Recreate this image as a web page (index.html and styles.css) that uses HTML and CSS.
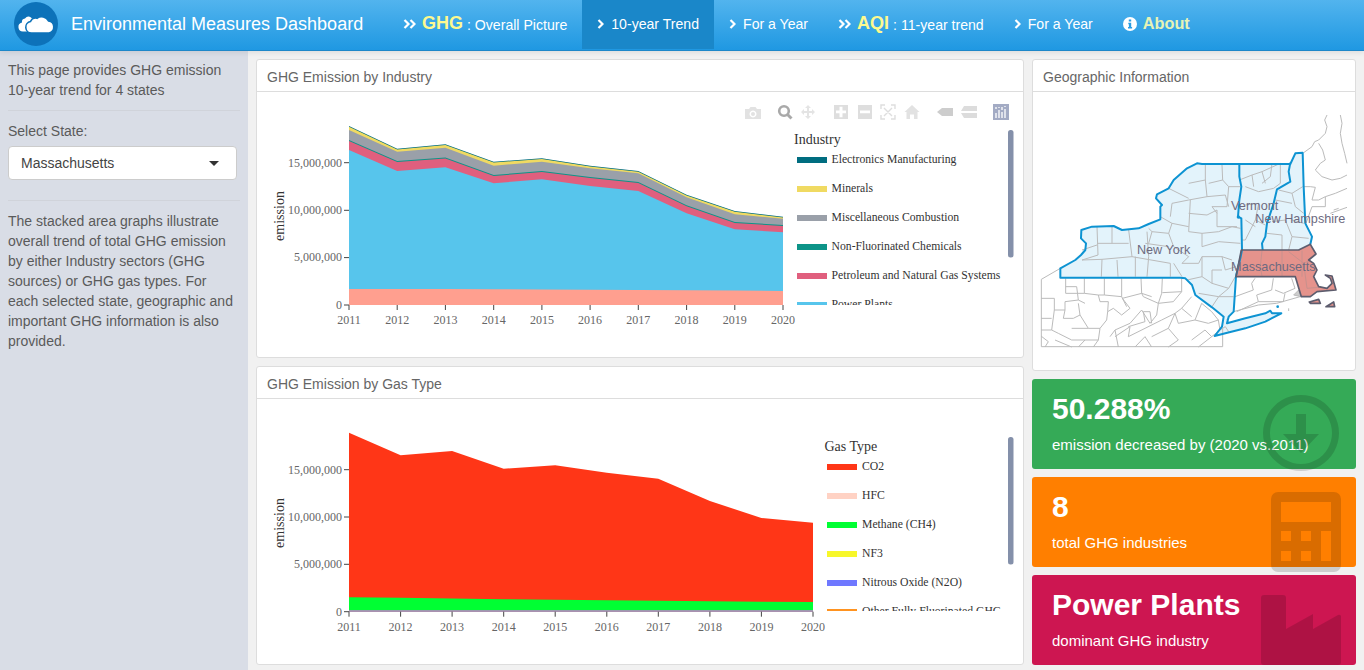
FILE: index.html
```html
<!DOCTYPE html>
<html lang="en">

<head>
    <meta charset="UTF-8">
    <meta name="viewport" content="width=device-width, initial-scale=1.0">
    <title>Environmental Measures Dashboard</title>
    <link rel="stylesheet" href="styles.css">
</head>

<body>
    <!-- Top bar -->
    <header class="topbar">
        <div class="brand">
            <svg class="brand-logo" viewBox="0 0 44 44">
                <circle cx="22" cy="22" r="22" fill="#0d72b9"/>
                <path fill="#fff" d="M9 29.500a4.500 4.500 0 0 1-1-8.900 3.500 3.500 0 0 1 3-4.100 4.500 4.500 0 0 1 6-1l3 4-4 10z"/>
                <path fill="#fff" stroke="#0d72b9" stroke-width="1.600" d="M17.500 31a5.800 5.800 0 0 1-1-11.500 5.500 5.500 0 0 1 6.500-3.200 7.800 7.800 0 0 1 11.500 2.700 6.100 6.100 0 0 1 .5 12z"/>
            </svg>
            <span class="brand-title">Environmental Measures Dashboard</span>
        </div>
        <nav class="nav">
            <a class="nav-item">
                <svg class="nav-icon wide" viewBox="0 0 13 10"><path d="M1.500 1l4 4-4 4M7.500 1l4 4-4 4"/></svg>
                <b class="nav-big">GHG</b><span class="nav-sub">: Overall Picture</span>
            </a>
            <a class="nav-item active">
                <svg class="nav-icon" viewBox="0 0 7 10"><path d="M1.500 1l4 4-4 4"/></svg>
                <span>10-year Trend</span>
            </a>
            <a class="nav-item">
                <svg class="nav-icon" viewBox="0 0 7 10"><path d="M1.500 1l4 4-4 4"/></svg>
                <span>For a Year</span>
            </a>
            <a class="nav-item">
                <svg class="nav-icon wide" viewBox="0 0 13 10"><path d="M1.500 1l4 4-4 4M7.500 1l4 4-4 4"/></svg>
                <b class="nav-big">AQI</b><span class="nav-sub">: 11-year trend</span>
            </a>
            <a class="nav-item">
                <svg class="nav-icon" viewBox="0 0 7 10"><path d="M1.500 1l4 4-4 4"/></svg>
                <span>For a Year</span>
            </a>
            <a class="nav-item">
                <svg class="nav-info" viewBox="0 0 14 14">
                    <circle cx="7" cy="7" r="7" fill="#fff"/>
                    <path fill="#2a9de3" d="M5.800 2.500h2.400v2H5.800zM5.300 5.800h2.900v4.200h.9v1.400H5v-1.400h.9V7.200h-.6z"/>
                </svg>
                <b class="nav-about">About</b>
            </a>
        </nav>
    </header>

    <div class="page">
        <!-- Sidebar -->
        <aside class="sidebar">
            <p>This page provides GHG emission 10-year trend for 4 states</p>
            <hr>
            <label class="select-label">Select State:</label>
            <div class="select-box">
                <span>Massachusetts</span>
                <i class="caret"></i>
            </div>
            <hr class="second">
            <p>The stacked area graphs illustrate overall trend of total GHG emission by either Industry sectors (GHG sources) or GHG gas types. For each selected state, geographic and important GHG information is also provided.</p>
        </aside>

        <main class="content">
            <div class="col-left">
                <section class="card chart-card">
                    <div class="card-head">GHG Emission by Industry</div>
                    <svg class="chart" viewBox="257 92 766 265">
                        <defs>
                            <clipPath id="legendClipA"><rect x="790" y="125" width="225" height="180"/></clipPath>
                        </defs>

                        <!-- modebar -->
                        <g class="modebar">
                            <path fill="#e2e2e2" d="M745 109h4l1.500-2h5l1.500 2h4v10h-16zM753 110.500a3.500 3.500 0 1 0 .01 0z"/>
                            <circle cx="753" cy="114" r="2" fill="#e2e2e2"/>
                            <circle cx="784" cy="111" r="4.800" fill="none" stroke="#a9a9a9" stroke-width="2.600"/>
                            <path stroke="#a9a9a9" stroke-width="3" d="M787.500 114.500l4 4"/>
                            <path fill="#e4e4e4" d="M808 105l-3 3h2v3h-3v-2l-3 3 3 3v-2h3v3h-2l3 3 3-3h-2v-3h3v2l3-3-3-3v2h-3v-3h2l-3-3z"/>
                            <path fill="#dedede" d="M834 105h14v14h-14zM839.500 106.800v3.700h-3.500v2.800h3.500v3.900h3v-3.900h3.500v-2.800h-3.500v-3.700z"/>
                            <path fill="#dedede" d="M858 105h14v14h-14zM860 110.500v2.800h10v-2.800z"/>
                            <path fill="none" stroke="#dedede" stroke-width="1.400" d="M881 109v-4h4M891 105h4v4M895 115v4h-4M885 119h-4v-4M884 108l8 8M892 108l-8 8"/>
                            <path fill="#e2e2e2" d="M912 105l7.500 7h-2v7h-3.500v-4.500h-4V119h-3.500v-7h-2z"/>
                            <path fill="#cdcdcd" d="M937 112l5-4h11v8h-11z"/>
                            <path fill="#dcdcdc" d="M964 106h13v5h-16zM961 113h16v5h-13z"/>
                            <rect x="993" y="104" width="16" height="16" fill="#a3abc4"/>
                            <path stroke="#fff" stroke-width="1.300" d="M996 113v5M999 110v8M1002 112v6M1005 109v9M996 107v2M999 107v1M1002 107v3M1005 106v1"/>
                        </g>

                        <!-- stacked areas, top layer first -->
                        <path fill="#006d80" d="M349 126L397.200 148.700 445.400 144.300 493.700 161.700 541.900 158.300 590.100 165.700 638.300 171 686.600 194.700 734.800 211 783 216.700V305H349z"/>
                        <path fill="#f0da62" d="M349 126.800L397.200 149.500 445.400 145.100 493.700 162.500 541.900 159.100 590.100 166.500 638.300 171.800 686.600 195.500 734.800 211.800 783 217.500V305H349z"/>
                        <path fill="#9aa0a9" d="M349 130L397.200 151.700 445.400 147.700 493.700 165.700 541.900 161.700 590.100 168.300 638.300 173.300 686.600 197.300 734.800 214.300 783 218.700V305H349z"/>
                        <path fill="#0d9488" d="M349 140L397.200 161 445.400 157.600 493.700 175 541.900 171 590.100 177 638.300 182 686.600 205.300 734.800 222 783 225V305H349z"/>
                        <path fill="#e05f7e" d="M349 141L397.200 162 445.400 158.600 493.700 176 541.900 172 590.100 178 638.300 183 686.600 206.300 734.800 223 783 226V305H349z"/>
                        <path fill="#57c5ec" d="M349 150L397.200 171 445.400 167.300 493.700 183.300 541.900 179.300 590.100 186 638.300 191 686.600 213.300 734.800 229.300 783 232.300V305H349z"/>
                        <path fill="#ff9f8f" d="M349 289L397.200 289 445.400 289 493.700 289.300 541.900 289.500 590.100 289.700 638.300 290 686.600 290.300 734.800 290.500 783 291V305H349z"/>

                        <!-- axes -->
                        <path class="tick" d="M349 305v5M397.200 305v5M445.400 305v5M493.700 305v5M541.900 305v5M590.100 305v5M638.300 305v5M686.600 305v5M734.800 305v5M783 305v5M344 305h5M344 257.600h5M344 210.300h5M344 162.700h5"/>
                        <g class="axis-y">
                            <text x="342" y="167">15,000,000</text>
                            <text x="342" y="214">10,000,000</text>
                            <text x="342" y="261">5,000,000</text>
                            <text x="342" y="309">0</text>
                        </g>
                        <g class="axis-x">
                            <text x="349" y="324">2011</text>
                            <text x="397.200" y="324">2012</text>
                            <text x="445.400" y="324">2013</text>
                            <text x="493.700" y="324">2014</text>
                            <text x="541.900" y="324">2015</text>
                            <text x="590.100" y="324">2016</text>
                            <text x="638.300" y="324">2017</text>
                            <text x="686.600" y="324">2018</text>
                            <text x="734.800" y="324">2019</text>
                            <text x="783" y="324">2020</text>
                        </g>
                        <text class="axis-title" transform="translate(284 216) rotate(-90)">emission</text>

                        <!-- legend -->
                        <g clip-path="url(#legendClipA)">
                            <text class="legend-title" x="794" y="144">Industry</text>
                            <g class="legend">
                                <rect x="797" y="157" width="30" height="6" fill="#006d80"/><text x="831.500" y="163">Electronics Manufacturing</text>
                                <rect x="797" y="186" width="30" height="6" fill="#f0da62"/><text x="831.500" y="192">Minerals</text>
                                <rect x="797" y="215" width="30" height="6" fill="#9aa0a9"/><text x="831.500" y="221">Miscellaneous Combustion</text>
                                <rect x="797" y="244" width="30" height="6" fill="#0d9488"/><text x="831.500" y="250">Non-Fluorinated Chemicals</text>
                                <rect x="797" y="273" width="30" height="6" fill="#e05f7e"/><text x="831.500" y="279">Petroleum and Natural Gas Systems</text>
                                <rect x="797" y="302" width="30" height="6" fill="#57c5ec"/><text x="831.500" y="308">Power Plants</text>
                            </g>
                        </g>
                        <rect x="1008" y="130" width="5.500" height="127.500" rx="2.500" fill="#8490aa"/>
                    </svg>
                </section>

                <section class="card chart-card">
                    <div class="card-head">GHG Emission by Gas Type</div>
                    <svg class="chart" viewBox="257 399 766 265">
                        <defs>
                            <clipPath id="legendClipB"><rect x="820" y="430" width="195" height="181"/></clipPath>
                        </defs>

                        <path fill="#ff3617" d="M349 432.700L400.600 455.300 452.100 451 503.700 468.700 555.200 465.300 606.800 472.700 658.300 478.700 709.900 501 761.400 518 813 522.700V611.700H349z"/>
                        <path fill="#00ff33" d="M349 597.300L400.600 597.800 452.100 598.500 503.700 599.300 555.200 599.700 606.800 600.200 658.300 600.800 709.900 601.200 761.400 601.700 813 602V611.700H349z"/>
                        <path fill="#cf78d8" d="M349 610.300H813V611.700H349z"/>

                        <path class="tick" d="M349 611.700v5M400.600 611.700v5M452.100 611.700v5M503.700 611.700v5M555.200 611.700v5M606.800 611.700v5M658.300 611.700v5M709.900 611.700v5M761.400 611.700v5M813 611.700v5M344 611.700h5M344 564.300h5M344 517h5M344 469.700h5"/>
                        <g class="axis-y">
                            <text x="342" y="474">15,000,000</text>
                            <text x="342" y="521">10,000,000</text>
                            <text x="342" y="568">5,000,000</text>
                            <text x="342" y="616">0</text>
                        </g>
                        <g class="axis-x">
                            <text x="349" y="631">2011</text>
                            <text x="400.600" y="631">2012</text>
                            <text x="452.100" y="631">2013</text>
                            <text x="503.700" y="631">2014</text>
                            <text x="555.200" y="631">2015</text>
                            <text x="606.800" y="631">2016</text>
                            <text x="658.300" y="631">2017</text>
                            <text x="709.900" y="631">2018</text>
                            <text x="761.400" y="631">2019</text>
                            <text x="813" y="631">2020</text>
                        </g>
                        <text class="axis-title" transform="translate(284 523) rotate(-90)">emission</text>

                        <g clip-path="url(#legendClipB)">
                            <text class="legend-title" x="824.500" y="451">Gas Type</text>
                            <g class="legend">
                                <rect x="827" y="464" width="30" height="6" fill="#ff3617"/><text x="862" y="470">CO2</text>
                                <rect x="827" y="493" width="30" height="6" fill="#ffd2c4"/><text x="862" y="499">HFC</text>
                                <rect x="827" y="522" width="30" height="6" fill="#00ff33"/><text x="862" y="528">Methane (CH4)</text>
                                <rect x="827" y="551" width="30" height="6" fill="#f7f72a"/><text x="862" y="557">NF3</text>
                                <rect x="827" y="580" width="30" height="6" fill="#6f78ff"/><text x="862" y="586">Nitrous Oxide (N2O)</text>
                                <rect x="827" y="609" width="30" height="6" fill="#ff9320"/><text x="862" y="615">Other Fully Fluorinated GHG</text>
                            </g>
                        </g>
                        <rect x="1008" y="437" width="5.500" height="127.500" rx="2.500" fill="#8490aa"/>
                    </svg>
                </section>
            </div>

            <div class="col-right">
                <section class="card geo-card">
                    <div class="card-head">Geographic Information</div>
                    <svg class="map" viewBox="3 -24 966 834">
                        <!-- state fills -->
                        <g class="state">
                            <path d="M85 533V505L130 480 147 465 160 450 162 430 147 415 148 390 180 380 245 378 270 390 320 385 350 372 385 358V320L390 315 372 295 375 283 410 265 425 240 465 205 495 190 510 192H622L622 230 628 260 622 300 618 350 628 355 630 450 625 475 612 528 610 560 605 635 590 650 585 670 640 655 700 640 715 632 720 640 748 640 700 665 640 685 580 700 548 708 570 680 575 650 540 622 490 585 480 555 460 535 445 533z"/>
                            <path d="M622 190H775L770 215 775 245 735 268 725 310 705 370 700 410 690 430 692 450H630L628 355 618 350 622 300 628 260 622 230z"/>
                            <path d="M775 188L790 160 812 158 815 260 820 370 840 410 835 435 800 450H692L690 430 700 410 705 370 725 310 735 268 775 245 770 215z"/>
                        </g>

                        <!-- county lines: New York -->
                        <path class="county" d="M520 192V240L525 290 470 300 420 310 415 350M410 265L470 295M570 195L572 240 590 260H625M572 240L530 250M525 290L580 285 590 320M475 300L470 395 510 400 510 440 560 425 625 430M555 330L555 380H615M585 320H540L555 340M385 350L420 370 470 380M350 385L360 395 410 400 425 440 470 470 450 490M195 380L198 465 150 480M240 380V430H195M290 390L300 470 210 478 208 530M255 480L258 530M310 470V530M345 395L350 470 345 530M300 470L415 490V530M450 490H500L510 470H570L600 480M465 540L510 530 540 550 590 565 610 530M500 580L560 590H605M510 400L560 395 600 380 625 385M570 470L580 510 612 500M340 430L410 440M150 480L210 478M195 435L150 450M240 430L290 430M360 395L350 430M420 370L410 400M470 340L525 345 555 330M520 240L470 250M590 260L585 320M425 490L450 530M510 470V530M540 550V510L570 510M590 565L560 590M540 620L560 590"/>
                        <!-- Vermont and New Hampshire -->
                        <path class="county" d="M622 240L660 225 690 215 745 190V250L725 265M640 260L680 275 725 265M660 225L665 260M690 215L700 250M640 315L680 310 670 360 640 420H630M670 360L700 375M740 270L780 280 812 260M780 280L790 320 815 340M720 365L760 360 780 410 830 415M705 400L750 405V450M780 410L770 450M720 190L715 230 690 250M640 360L670 380M730 300L780 310M815 370L780 360"/>
                        <!-- Maine -->
                        <path class="county" d="M885 45L878 60 885 80 880 100 860 120 848 125 840 140 815 158M925 45L930 70 925 100 930 130 938 160 945 190M860 130L872 150 880 180 865 190 850 210 870 230 885 235 900 240 925 235 945 225M815 260H835L850 262 840 300 860 300 880 290 910 280 945 265M880 290V320L840 320 822 370M895 340L945 322M905 330L920 325"/>
                        <!-- Pennsylvania and New Jersey -->
                        <path class="county" d="M85 505L28 538V740H572V685"/>
                        <g transform="translate(9 420)">
                            <path class="county" d="M18 175H58V210H90V185L130 180 150 190M92 115V160H148V115M148 160L190 165H208V115M260 115V170L208 165M190 165L195 185H220L218 215 235 205 260 225 285 205 262 175 320 160M318 115L320 160 325 170 370 190 380 160 382 115M382 158L440 155V115M440 155L415 185 370 190M370 190L365 225 345 250 320 210 285 250 240 270 225 290M58 210L50 270H18M18 235H50M90 210L85 235H115L135 225 160 265H195L190 300 175 321M135 225L130 190M110 265H160M50 270L70 280 110 300H190M18 288L40 305 30 321M195 265L215 240 218 215M280 260L330 245 325 215H345L350 250M240 290L285 260 280 290 330 265 380 240 420 220 440 205 470 170M420 220L430 250 480 240 500 190M480 240L520 250 550 240 555 270 530 290M350 290L400 265 430 300 400 321M300 321L330 290 350 321M470 300L510 270 530 290 490 321M130 180L125 140 92 140M260 170L275 200M320 160L350 170M60 300L110 321M240 270L250 321M150 300L130 321M440 205L470 230M400 265L420 220M500 190L530 215 550 240"/>
                        </g>
                        <!-- Connecticut and Rhode Island -->
                        <path class="county" d="M669 535L659 550 664 570 609 590M724 535L719 570 674 585 679 605 614 635M779 535L789 565 754 580 729 570M759 580L754 605H679M584 660L604 635 679 615 734 610 804 590 799 570"/>

                        <!-- selected state -->
                        <path class="state-active" d="M628 450H800L835 433 852 462 830 480 845 490 855 510 845 530 860 560 885 565 900 550 895 535 880 525 900 528 912 570 855 575 835 590 808 590 790 530H612z"/>
                        <path class="county ma" d="M690 452L685 500 690 528M750 452V528M810 452V530M770 455L815 490 835 480M815 490L825 565 860 562"/>
                        <path class="state-active" d="M832 606L860 598 865 610 835 610zM882 620L905 606 908 620z"/>
                        <path class="county boston" d="M785 585L800 570 808 590z"/>
                        <path class="county" d="M770 625v8M555 695L580 680 590 695"/>
                        <path class="state-line" d="M612 528L610 560 605 635 590 650 585 670 640 655 700 640 715 632 720 640 748 640 700 665 640 685 580 700 548 708 570 680 575 650 540 622 490 585 480 555 460 535 445 533H85V505L130 480 147 465 160 450 162 430 147 415 148 390 180 380 245 378 270 390 320 385 350 372 385 358V320L390 315 372 295 375 283 410 265 425 240 465 205 495 190 510 192H775L790 160 812 158 815 260 820 370 840 410 835 433M622 190L622 230 628 260 622 300 618 350 628 355 630 450 625 475 612 528M775 188L770 215 775 245 735 268 725 310 705 370 700 410 690 430 692 450"/>
                        <path class="state-active-line" d="M628 450H800L835 433 852 462 830 480 845 490 855 510 845 530 860 560 885 565 900 550 895 535 880 525 900 528 912 570 855 575 835 590 808 590 790 530H612zM832 606L860 598 865 610 835 610zM882 620L905 606 908 620z"/>
                        <circle cx="619" cy="351" r="5" fill="#0d93d2"/>
                        <circle cx="737" cy="620" r="4" fill="#0d93d2"/>

                        <g class="map-label">
                            <text x="395" y="463">New York</text>
                            <text x="668" y="329">Vermont</text>
                            <text x="805" y="369">New Hampshire</text>
                            <text x="724" y="512">Massachusetts</text>
                        </g>
                    </svg>
                </section>

                <div class="value-box green">
                    <h3>50.288%</h3>
                    <p>emission decreased by (2020 vs.2011)</p>
                    <svg class="value-icon icon-down" viewBox="0 0 80 80">
                        <path fill-rule="evenodd" d="M40 2a38 38 0 1 0 .01 0zM40 9a31 31 0 1 1-.01 0z"/>
                        <path d="M35 21h10v20h13L40 60 22 41h13z"/>
                    </svg>
                </div>
                <div class="value-box orange">
                    <h3>8</h3>
                    <p>total GHG industries</p>
                    <svg class="value-icon icon-calc" viewBox="0 0 70 80">
                        <path fill-rule="evenodd" d="M7 0h56a7 7 0 0 1 7 7v66a7 7 0 0 1-7 7H7a7 7 0 0 1-7-7V7a7 7 0 0 1 7-7zM10 10v20h50V10zM10 39v10h10V39zM30 39v10h10V39zM50 39v30h10V39zM10 59v10h10V59zM30 59v10h10V59z"/>
                    </svg>
                </div>
                <div class="value-box pink">
                    <h3>Power Plants</h3>
                    <p>dominant GHG industry</p>
                    <svg class="value-icon icon-factory" viewBox="0 0 80 70">
                        <path d="M3 0h19a3 3 0 0 1 3 3v31l27-15v15l25-14a2 2 0 0 1 3 2v45a3 3 0 0 1-3 3H3a3 3 0 0 1-3-3V3a3 3 0 0 1 3-3z"/>
                    </svg>
                </div>
            </div>
        </main>
    </div>
</body>

</html>
```

FILE: styles.css
```css
* {
    margin: 0;
    padding: 0;
    box-sizing: border-box;
}

body {
    background-color: #f1f1f1;
    font-family: "Liberation Sans", Arial, sans-serif;
    font-size: 14px;
    color: #5a5a5a;
    overflow: hidden;
}

/* Top bar */
.topbar {
    display: flex;
    height: 51px;
    background: linear-gradient(#52b4ee, #1f98e2);
    border-bottom: 1px solid #1d87c9;
    box-shadow: 0 2px 5px rgba(0, 0, 0, 0.08);
    color: white;
    position: relative;
}

.brand {
    display: flex;
    align-items: center;
    width: 388px;
    padding: 0 0 2px 14px;
    gap: 13px;
}

.brand-logo {
    width: 44px;
    height: 44px;
}

.brand-title {
    font-size: 18px;
    white-space: nowrap;
}

.nav {
    display: flex;
    height: 49px;
    font-size: 14.1px;
}

.nav-item {
    display: flex;
    align-items: center;
    padding: 0 15px 2px;
    white-space: nowrap;
}

.nav-item.active {
    background-color: #1a87c9;
}

.nav-icon {
    width: 7px;
    height: 10px;
    margin-right: 7px;
    fill: none;
    stroke: white;
    stroke-width: 2.2;
}

.nav-icon.wide {
    width: 13px;
    margin-right: 6px;
}

.nav-big {
    font-size: 18px;
    color: #fdf98f;
    margin-right: 4px;
}

.nav-sub {
    padding-top: 2px;
}

.nav-info {
    width: 14px;
    height: 14px;
    margin-right: 6px;
}

.nav-about {
    font-size: 16.3px;
    color: #e6f3b5;
}

/* Page */
.page {
    display: flex;
    height: 619px;
}

.sidebar {
    width: 248px;
    flex-shrink: 0;
    background-color: #d9dde6;
    padding: 9px 8px 0;
    line-height: 20px;
}

.sidebar hr {
    border: none;
    border-top: 1px solid #d0d3da;
    margin: 10px 0 10px;
}

.sidebar hr.second {
    margin: 20px 0 10px;
}

.select-label {
    display: block;
    margin-bottom: 5px;
}

.select-box {
    display: flex;
    align-items: center;
    justify-content: space-between;
    height: 34px;
    width: 229px;
    background-color: white;
    border: 1px solid #ccc;
    border-radius: 4px;
    padding: 0 17px 0 12px;
    color: #444;
}

.caret {
    width: 0;
    height: 0;
    border-left: 5px solid transparent;
    border-right: 5px solid transparent;
    border-top: 5px solid #333;
}

.content {
    display: flex;
    gap: 8px;
    padding: 8px 8px 5px;
}

.col-left {
    display: flex;
    flex-direction: column;
    gap: 8px;
    width: 768px;
}

.col-right {
    display: flex;
    flex-direction: column;
    gap: 8px;
    width: 324px;
}

/* Cards */
.card {
    background-color: white;
    border: 1px solid #ddd;
    border-radius: 3px;
}

.chart-card {
    height: 299px;
}

.geo-card {
    height: 312px;
}

.card-head {
    height: 32px;
    line-height: 34px;
    padding-left: 10px;
    border-bottom: 1px solid #ddd;
    color: #666;
}

.chart {
    display: block;
    width: 766px;
    height: 265px;
}

.chart text {
    font-family: "Liberation Serif", "Times New Roman", serif;
}

.tick {
    stroke: #444;
    stroke-width: 1;
    fill: none;
}

.axis-y text {
    font-size: 12px;
    fill: #666;
    text-anchor: end;
}

.axis-x text {
    font-size: 12px;
    fill: #666;
    text-anchor: middle;
}

.axis-title {
    font-size: 14px;
    fill: #333;
    text-anchor: middle;
}

.legend-title {
    font-size: 14px;
    fill: #333;
}

.legend text {
    font-size: 11.7px;
    fill: #333;
}

/* Map */
.map {
    display: block;
    width: 322px;
    height: 278px;
}

.state path {
    fill: #e3f3fb;
}

.state-active {
    fill: #e5938c;
    stroke: none;
}

.county {
    fill: none;
    stroke: #bbb;
    stroke-width: 3;
    stroke-linejoin: round;
}

.county.ma {
    stroke: #c8918d;
}

.county.boston {
    fill: #ccc;
}

.state-line {
    fill: none;
    stroke: #0d93d2;
    stroke-width: 6;
    stroke-linejoin: round;
}

.state-active-line {
    fill: none;
    stroke: #5d5d6e;
    stroke-width: 5;
    stroke-linejoin: round;
}

.map-label text {
    font-size: 38px;
    fill: #6d6a80;
    text-anchor: middle;
}

/* Value boxes */
.value-box {
    position: relative;
    height: 90px;
    border-radius: 3px;
    padding: 10px 20px;
    color: white;
}

.value-box h3 {
    font-size: 30px;
    line-height: 40px;
    font-weight: bold;
}

.value-box p {
    font-size: 15px;
    line-height: 20px;
    margin-top: 6px;
}

.green {
    background-color: #35aa57;
}

.orange {
    background-color: #ff7f00;
}

.pink {
    background-color: #cd1651;
}

.value-icon {
    position: absolute;
    right: 15px;
    fill: rgba(0, 0, 0, 0.15);
}

.icon-down {
    top: 14px;
    width: 80px;
    height: 80px;
}

.icon-calc {
    top: 15px;
    width: 70px;
    height: 80px;
}

.icon-factory {
    top: 20px;
    width: 80px;
    height: 70px;
}
```
